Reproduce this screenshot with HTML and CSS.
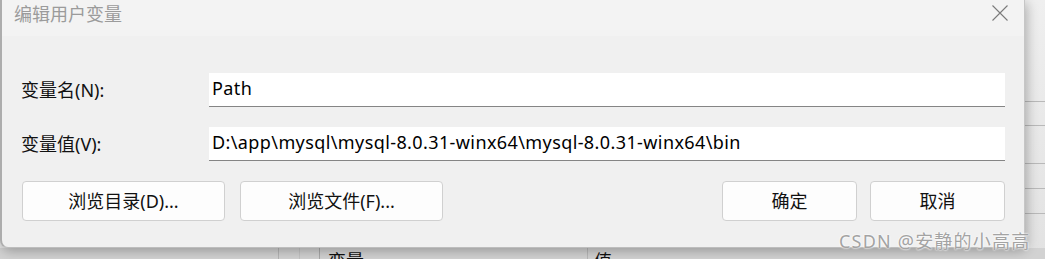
FILE: index.html
```html
<!DOCTYPE html>
<html lang="zh-CN">
<head>
  <meta charset="UTF-8">
  <title>编辑用户变量</title>
  <link rel="stylesheet" href="styles.css">
</head>
<body>
  <div class="desktop">
    <!-- the environment variables window behind the dialog -->
    <div class="env-window">
      <div class="env-rows">
        <div class="env-row r1"></div>
        <div class="env-row r2"></div>
        <div class="env-row r3"></div>
        <div class="env-row r4"></div>
        <div class="env-row r5"></div>
      </div>
      <div class="env-header">
        <div class="col col-a"></div>
        <div class="col col-b"></div>
        <div class="col col-name">变量</div>
        <div class="col col-value">值</div>
      </div>
    </div>

    <div class="dialog">
      <div class="titlebar">
        <span class="title">编辑用户变量</span>
        <button class="close" aria-label="关闭">
          <svg width="16" height="16" viewBox="0 0 16 16">
            <path d="M0.5 0.5 L15.5 15.5 M15.5 0.5 L0.5 15.5" stroke="#7a7a7a" stroke-width="1.1" fill="none"/>
          </svg>
        </button>
      </div>
      <div class="dialog-body">
        <div class="field">
          <label for="var-name">变量名(N):</label>
          <input type="text" id="var-name" value="Path">
        </div>
        <div class="field">
          <label for="var-value">变量值(V):</label>
          <input type="text" id="var-value" value="D:\app\mysql\mysql-8.0.31-winx64\mysql-8.0.31-winx64\bin">
        </div>
        <div class="actions">
          <div class="actions-left">
            <button class="btn btn-wide">浏览目录(D)...</button>
            <button class="btn btn-wide">浏览文件(F)...</button>
          </div>
          <div class="actions-right">
            <button class="btn btn-ok">确定</button>
            <button class="btn btn-cancel">取消</button>
          </div>
        </div>
      </div>
    </div>

    <div class="watermark">CSDN @安静的小高高</div>
  </div>
</body>
</html>
```
FILE: styles.css
```css
body {
    margin: 0;
    font-family: "Noto Sans", "Noto Sans CJK SC", sans-serif;
    background: #e6e6e6;
    overflow: hidden;
}
.desktop {
    position: relative;
    width: 1045px;
    height: 259px;
    overflow: hidden;
}

/* window behind */
.env-window {
    width: 1045px;
    height: 259px;
    background: linear-gradient(to bottom, #efefef, #e2e2e2);
}
.env-rows {
    padding-top: 101px;
}
.env-row {
    border-top: 1px solid #b9b9b9;
    box-sizing: border-box;
}
.r1 { height: 24px; }
.r2 { height: 38px; }
.r3 { height: 25px; }
.r4 { height: 25px; }
.r5 { height: 35px; }
.env-header {
    display: flex;
    height: 20px;
    background: #d2d2d2;
    font-size: 18px;
    color: #111;
}
.col {
    height: 20px;
    box-sizing: border-box;
}
.col-a {
    margin-left: 278px;
    width: 21px;
    border-left: 1px solid #b5b5b5;
}
.col-b {
    width: 20px;
    border-left: 1px solid #c4c4c4;
}
.col-name {
    width: 268px;
    border-left: 1px solid #a8a8a8;
    padding: 0 0 0 8px;
    line-height: 26px;
}
.col-value {
    border-left: 1px solid #b8b8b8;
    padding: 0 0 0 6px;
    line-height: 26px;
}

/* dialog */
.dialog {
    position: absolute;
    left: 0;
    top: 0;
    width: 1025px;
    height: 248px;
    box-sizing: border-box;
    background: #f0f0f0;
    border-left: 2px solid #adadad;
    border-right: 1px solid #c6c6c6;
    border-bottom: 1px solid #bdbdbd;
    border-radius: 0 0 8px 8px;
    box-shadow: 2px 3px 12px rgba(0, 0, 0, 0.28);
}
.titlebar {
    height: 36px;
    background: #f3f3f3;
    display: flex;
    align-items: flex-start;
    justify-content: space-between;
}
.title {
    margin: 1px 0 0 12px;
    font-size: 18px;
    color: #9b9b9b;
    line-height: 26px;
}
.close {
    margin: 5px 16px 0 0;
    padding: 0;
    border: none;
    background: none;
    width: 16px;
    height: 16px;
}
.close svg {
    display: block;
}
.dialog-body {
    padding: 37px 19px 0 19px;
}
.field {
    display: grid;
    grid-template-columns: 188px 1fr;
    align-items: center;
    margin-bottom: 20px;
}
.field label {
    font-size: 18px;
    color: #111;
    padding-bottom: 2px;
}
.field input {
    height: 34px;
    box-sizing: border-box;
    border: none;
    border-bottom: 1px solid #858585;
    background: #fff;
    padding: 0 0 4px 3px;
    font-family: inherit;
    font-size: 18px;
    letter-spacing: 0.4px;
    color: #000;
    outline: none;
}
.actions {
    display: flex;
    justify-content: space-between;
    margin-top: 6px;
    padding-left: 1px;
}
.actions-left,
.actions-right {
    display: flex;
}
.btn {
    height: 40px;
    box-sizing: border-box;
    background: #fdfdfd;
    border: 1px solid #d0d0d0;
    border-radius: 4px;
    font-family: inherit;
    font-size: 18px;
    color: #111;
    padding: 0 0 2px 0;
}
.btn-wide {
    width: 203px;
    margin-right: 15px;
}
.btn-ok {
    width: 135px;
    margin-right: 13px;
}
.btn-cancel {
    width: 135px;
}

.watermark {
    position: absolute;
    left: 839px;
    top: 227px;
    font-size: 18px;
    letter-spacing: 1.2px;
    color: #a3a3a3;
    white-space: nowrap;
    text-shadow: 0 0 2px #fff, 0 0 2px #fff;
}
```
